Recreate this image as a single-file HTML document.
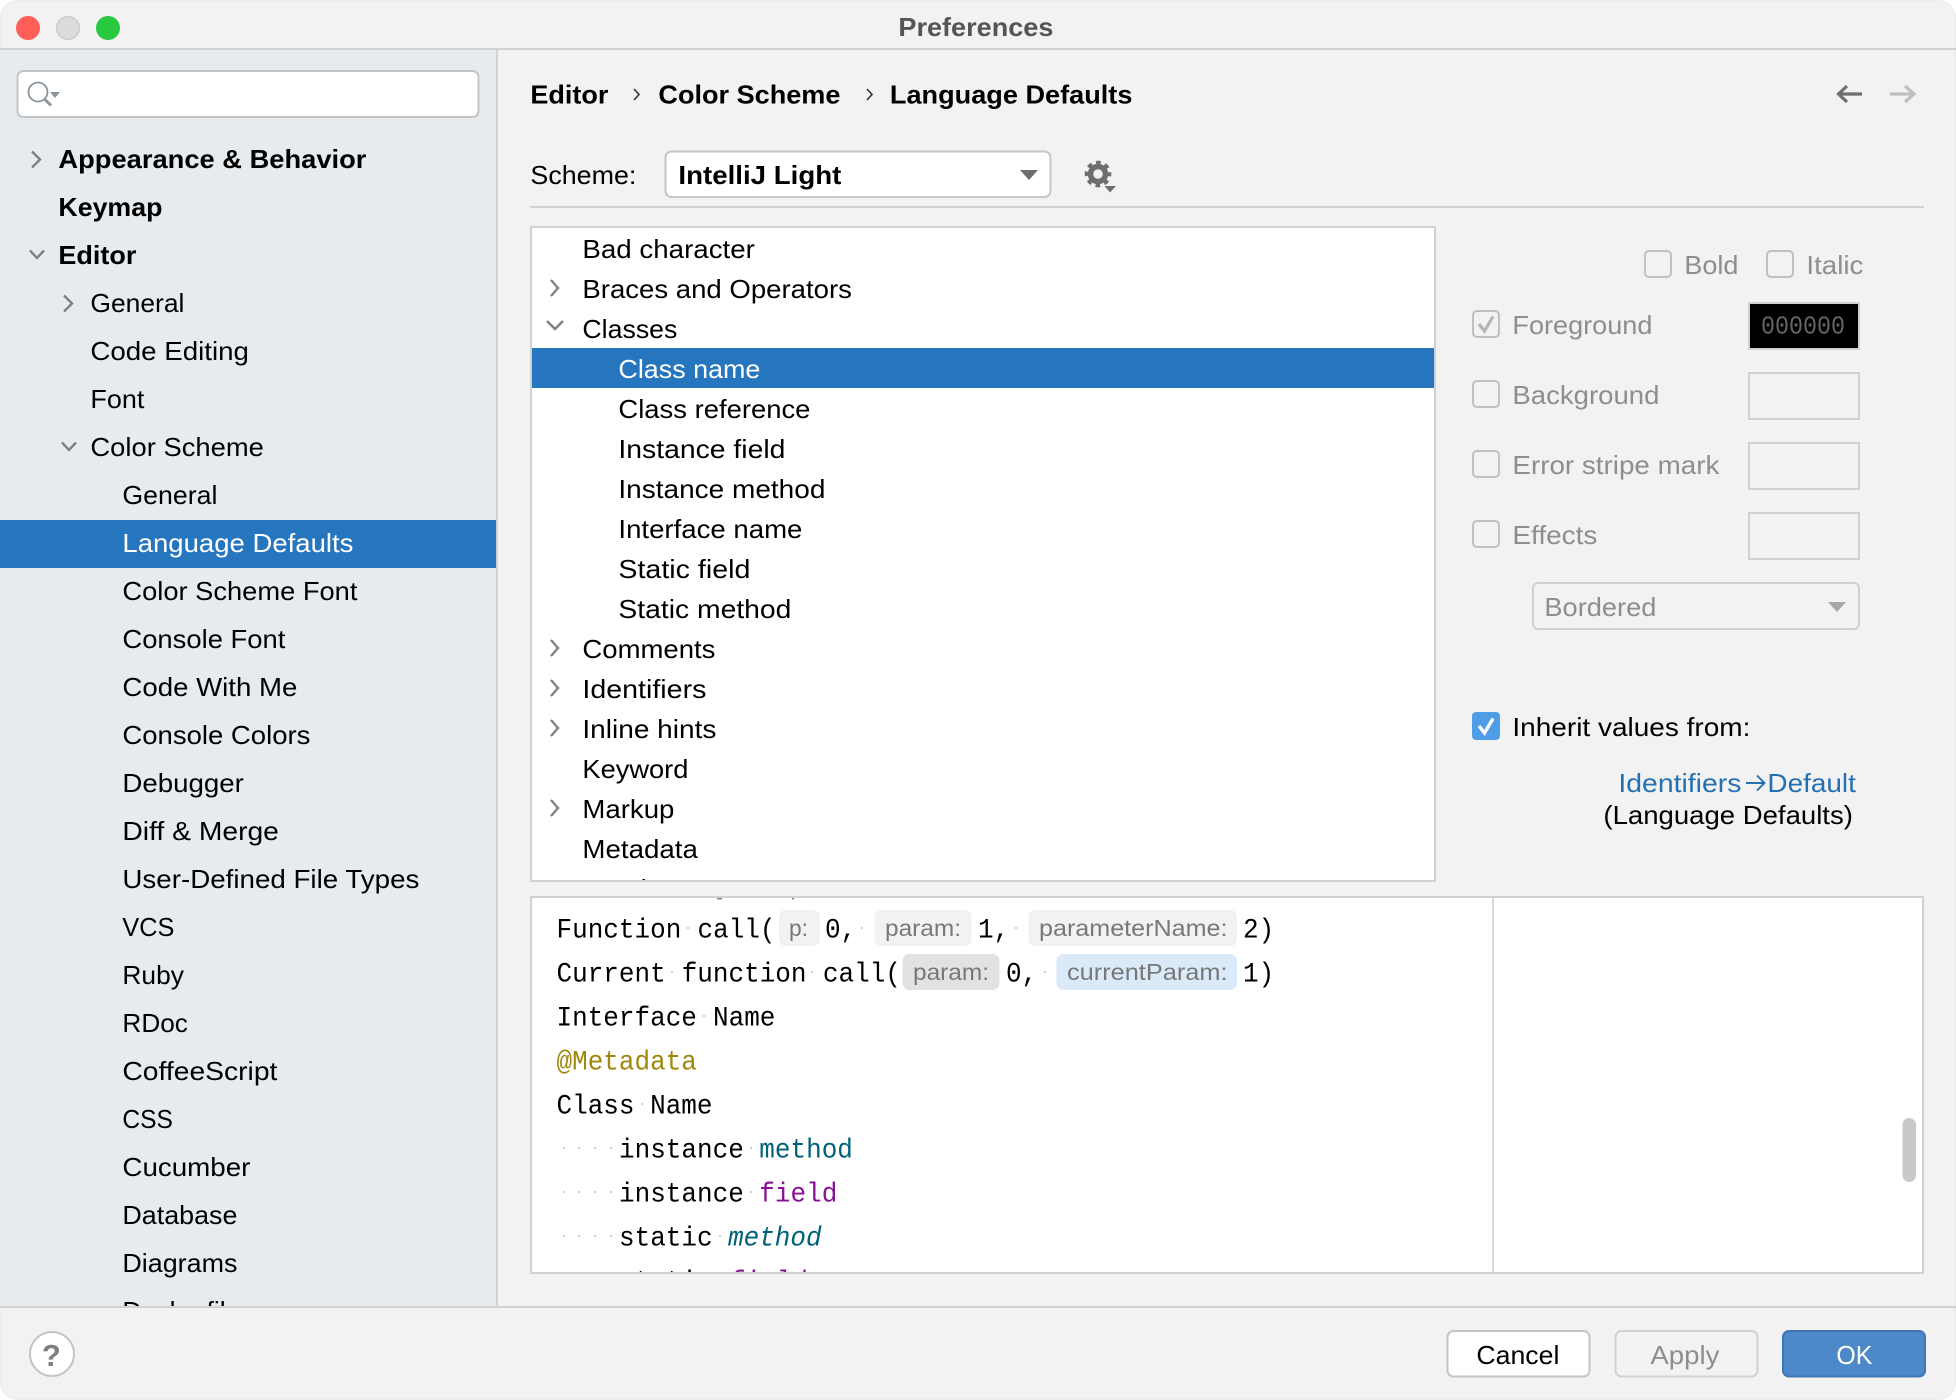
<!DOCTYPE html>
<html><head><meta charset="utf-8"><title>Preferences</title>
<style>
html,body{margin:0;padding:0;background:#fff}
svg{display:block}
text{font-family:"Liberation Sans",sans-serif;font-size:26px;fill:#000;white-space:pre;transform:translateX(-.6px)}
.b{font-weight:bold}
.g{fill:#8e8e8e}
.m{font-family:"Liberation Mono",monospace;font-size:28px;transform:translateY(-.5px)}
.h{font-size:23.5px;fill:#787878;transform:translateY(-.8px)}
.w{fill:#fff}
.c{fill:none;stroke:#808080;stroke-width:2.4}
.d{fill:#cfcfcf}
</style></head>
<body>
<svg width="1956" height="1400" viewBox="0 0 1956 1400" xmlns="http://www.w3.org/2000/svg">
<defs>
<clipPath id="cs"><rect x="0" y="50" width="496" height="1256"/></clipPath>
<clipPath id="cl"><rect x="532" y="229" width="902" height="651"/></clipPath>
<clipPath id="cp"><rect x="532" y="898" width="1390" height="374"/></clipPath>
</defs>
<rect x="0" y="0" width="1956" height="1400" rx="18" fill="#f2f2f2"/>
<rect x="0.5" y="0.5" width="1955" height="1399" rx="18" fill="none" stroke="#ececec"/>

<!-- title bar -->
<rect x="0" y="48" width="1956" height="2" fill="#d1d1d1"/>
<circle cx="28" cy="28" r="12" fill="#ff5f57"/>
<circle cx="68" cy="28" r="11.5" fill="#dcdcdc" stroke="#c6c6c6"/>
<circle cx="108" cy="28" r="12" fill="#28c840"/>
<text class="b" x="899" y="36" textLength="155" lengthAdjust="spacingAndGlyphs" style="fill:#555">Preferences</text>

<!-- sidebar -->
<rect x="0" y="50" width="496" height="1256" fill="#e6ebf0"/>
<rect x="496" y="50" width="2" height="1256" fill="#d1d1d1"/>
<rect x="0" y="520" width="496" height="48" fill="#2675bf"/>
<rect x="17.5" y="71" width="461" height="46" rx="6" fill="#fff" stroke="#c4c4c4" stroke-width="2"/>
<circle cx="38" cy="92" r="9.5" fill="none" stroke="#8a949c" stroke-width="1.8"/>
<path d="M44.5 99 L51 105.5" stroke="#8a949c" stroke-width="2.8" fill="none"/>
<path d="M50 92 H60 L55 98 Z" fill="#8a949c"/>
<g clip-path="url(#cs)">
<text class="b" x="59" y="168" textLength="308" lengthAdjust="spacingAndGlyphs">Appearance &amp; Behavior</text>
<text class="b" x="59" y="216" textLength="104" lengthAdjust="spacingAndGlyphs">Keymap</text>
<text class="b" x="59" y="264" textLength="78" lengthAdjust="spacingAndGlyphs">Editor</text>
<text x="91" y="312" textLength="94" lengthAdjust="spacingAndGlyphs">General</text>
<text x="91" y="360" textLength="158.5" lengthAdjust="spacingAndGlyphs">Code Editing</text>
<text x="91" y="408" textLength="54" lengthAdjust="spacingAndGlyphs">Font</text>
<text x="91" y="456" textLength="173.5" lengthAdjust="spacingAndGlyphs">Color Scheme</text>
<text x="123" y="504" textLength="95" lengthAdjust="spacingAndGlyphs">General</text>
<text class="w" x="123" y="552" textLength="231" lengthAdjust="spacingAndGlyphs">Language Defaults</text>
<text x="123" y="600" textLength="235" lengthAdjust="spacingAndGlyphs">Color Scheme Font</text>
<text x="123" y="648" textLength="163" lengthAdjust="spacingAndGlyphs">Console Font</text>
<text x="123" y="696" textLength="175" lengthAdjust="spacingAndGlyphs">Code With Me</text>
<text x="123" y="744" textLength="188" lengthAdjust="spacingAndGlyphs">Console Colors</text>
<text x="123" y="792" textLength="121.5" lengthAdjust="spacingAndGlyphs">Debugger</text>
<text x="123" y="840" textLength="156.5" lengthAdjust="spacingAndGlyphs">Diff &amp; Merge</text>
<text x="123" y="888" textLength="297" lengthAdjust="spacingAndGlyphs">User-Defined File Types</text>
<text x="123" y="936" textLength="52" lengthAdjust="spacingAndGlyphs">VCS</text>
<text x="123" y="984" textLength="61.5" lengthAdjust="spacingAndGlyphs">Ruby</text>
<text x="123" y="1032" textLength="65.5" lengthAdjust="spacingAndGlyphs">RDoc</text>
<text x="123" y="1080" textLength="155" lengthAdjust="spacingAndGlyphs">CoffeeScript</text>
<text x="123" y="1128" textLength="50.5" lengthAdjust="spacingAndGlyphs">CSS</text>
<text x="123" y="1176" textLength="128" lengthAdjust="spacingAndGlyphs">Cucumber</text>
<text x="123" y="1224" textLength="115" lengthAdjust="spacingAndGlyphs">Database</text>
<text x="123" y="1272" textLength="115" lengthAdjust="spacingAndGlyphs">Diagrams</text>
<text x="123" y="1320" textLength="118" lengthAdjust="spacingAndGlyphs">Dockerfile</text>
</g>
<path class="c" d="M32 151.5 L40 159.5 L32 167.5"/>
<path class="c" d="M30 250.5 L37 258 L44 250.5"/>
<path class="c" d="M64 295.5 L72 303.5 L64 311.5"/>
<path class="c" d="M62 442.5 L69 450 L76 442.5"/>

<!-- breadcrumb -->
<text class="b" x="531" y="103.5" textLength="78" lengthAdjust="spacingAndGlyphs">Editor</text>
<path d="M634 89 L639 94.5 L634 100" fill="none" stroke="#333" stroke-width="1.6"/>
<text class="b" x="659" y="103.5" textLength="182" lengthAdjust="spacingAndGlyphs">Color Scheme</text>
<path d="M867 89 L872 94.5 L867 100" fill="none" stroke="#333" stroke-width="1.6"/>
<text class="b" x="890.5" y="103.5" textLength="242.5" lengthAdjust="spacingAndGlyphs">Language Defaults</text>
<path d="M1862 94 H1840 M1847 86 L1838.5 94 L1847 102" fill="none" stroke="#6e6e6e" stroke-width="3.2"/>
<path d="M1890 94 H1913 M1905 86 L1914 94 L1905 102" fill="none" stroke="#bfbfbf" stroke-width="3.2"/>

<!-- scheme -->
<text x="531" y="184" textLength="106" lengthAdjust="spacingAndGlyphs">Scheme:</text>
<rect x="665.5" y="151.5" width="385" height="45.5" rx="6" fill="#fff" stroke="#c6c6c6" stroke-width="2"/>
<text class="b" x="679" y="184" textLength="163" lengthAdjust="spacingAndGlyphs">IntelliJ Light</text>
<path d="M1020 170 H1038 L1029 180 Z" fill="#6e6e6e"/>
<circle cx="1098" cy="174" r="7.5" fill="none" stroke="#6e6e6e" stroke-width="5.5"/>
<circle cx="1098" cy="174" r="11.3" fill="none" stroke="#6e6e6e" stroke-width="4" stroke-dasharray="4.6 4.28" stroke-dashoffset="2.3"/>
<path d="M1104.5 186 H1116 L1110 192.5 Z" fill="#6e6e6e"/>
<rect x="530" y="206" width="1394" height="2" fill="#d1d1d1"/>

<!-- list -->
<rect x="531" y="227" width="904" height="654" fill="#fff" stroke="#d1d1d1" stroke-width="2"/>
<rect x="532" y="348" width="902" height="40" fill="#2675bf"/>
<g clip-path="url(#cl)">
<text x="583" y="258" textLength="172.5" lengthAdjust="spacingAndGlyphs">Bad character</text>
<text x="583" y="298" textLength="269.5" lengthAdjust="spacingAndGlyphs">Braces and Operators</text>
<text x="583" y="338" textLength="95" lengthAdjust="spacingAndGlyphs">Classes</text>
<text class="w" x="619" y="378" textLength="142" lengthAdjust="spacingAndGlyphs">Class name</text>
<text x="619" y="418" textLength="192" lengthAdjust="spacingAndGlyphs">Class reference</text>
<text x="619" y="458" textLength="167" lengthAdjust="spacingAndGlyphs">Instance field</text>
<text x="619" y="498" textLength="207" lengthAdjust="spacingAndGlyphs">Instance method</text>
<text x="619" y="538" textLength="184" lengthAdjust="spacingAndGlyphs">Interface name</text>
<text x="619" y="578" textLength="132" lengthAdjust="spacingAndGlyphs">Static field</text>
<text x="619" y="618" textLength="173" lengthAdjust="spacingAndGlyphs">Static method</text>
<text x="583" y="658" textLength="133" lengthAdjust="spacingAndGlyphs">Comments</text>
<text x="583" y="698" textLength="124" lengthAdjust="spacingAndGlyphs">Identifiers</text>
<text x="583" y="738" textLength="134" lengthAdjust="spacingAndGlyphs">Inline hints</text>
<text x="583" y="778" textLength="106" lengthAdjust="spacingAndGlyphs">Keyword</text>
<text x="583" y="818" textLength="92" lengthAdjust="spacingAndGlyphs">Markup</text>
<text x="583" y="858" textLength="115.5" lengthAdjust="spacingAndGlyphs">Metadata</text>
<text x="583" y="898" textLength="98" lengthAdjust="spacingAndGlyphs">Number</text>
</g>
<path class="c" d="M551 280 L558 288 L551 296"/>
<path class="c" d="M547 321 L555 329 L563 321"/>
<path class="c" d="M551 640 L558 648 L551 656"/>
<path class="c" d="M551 680 L558 688 L551 696"/>
<path class="c" d="M551 720 L558 728 L551 736"/>
<path class="c" d="M551 800 L558 808 L551 816"/>

<!-- right options -->
<rect x="1645" y="251" width="26" height="26" rx="4" fill="none" stroke="#c0c0c0" stroke-width="2"/>
<text class="g" x="1685" y="274" textLength="54" lengthAdjust="spacingAndGlyphs">Bold</text>
<rect x="1767" y="251" width="26" height="26" rx="4" fill="none" stroke="#c0c0c0" stroke-width="2"/>
<text class="g" x="1807" y="274" textLength="57" lengthAdjust="spacingAndGlyphs">Italic</text>

<rect x="1473" y="311" width="26" height="26" rx="4" fill="none" stroke="#c0c0c0" stroke-width="2"/>
<path d="M1479 324 L1484.5 331 L1493 316.5" fill="none" stroke="#b4b4b4" stroke-width="3.2"/>
<text class="g" x="1513" y="334" textLength="140" lengthAdjust="spacingAndGlyphs">Foreground</text>
<rect x="1749" y="303" width="110" height="46" fill="#000" stroke="#d1d1d1" stroke-width="2"/>
<text class="m" x="1761" y="334" textLength="84" lengthAdjust="spacingAndGlyphs" style="font-size:26px;fill:#666">000000</text>

<rect x="1473" y="381" width="26" height="26" rx="4" fill="none" stroke="#c0c0c0" stroke-width="2"/>
<text class="g" x="1513" y="404" textLength="147" lengthAdjust="spacingAndGlyphs">Background</text>
<rect x="1749" y="373" width="110" height="46" fill="none" stroke="#d1d1d1" stroke-width="2"/>

<rect x="1473" y="451" width="26" height="26" rx="4" fill="none" stroke="#c0c0c0" stroke-width="2"/>
<text class="g" x="1513" y="474" textLength="207" lengthAdjust="spacingAndGlyphs">Error stripe mark</text>
<rect x="1749" y="443" width="110" height="46" fill="none" stroke="#d1d1d1" stroke-width="2"/>

<rect x="1473" y="521" width="26" height="26" rx="4" fill="none" stroke="#c0c0c0" stroke-width="2"/>
<text class="g" x="1513" y="544" textLength="85" lengthAdjust="spacingAndGlyphs">Effects</text>
<rect x="1749" y="513" width="110" height="46" fill="none" stroke="#d1d1d1" stroke-width="2"/>

<rect x="1533" y="583" width="326" height="46" rx="5" fill="none" stroke="#cfcfcf" stroke-width="2"/>
<text class="g" x="1545" y="616" textLength="112" lengthAdjust="spacingAndGlyphs">Bordered</text>
<path d="M1828 602 H1846 L1837 612 Z" fill="#a8a8a8"/>

<rect x="1472" y="712" width="28" height="28" rx="4" fill="#4e9de6"/>
<path d="M1479 726 L1484.5 733 L1493 718.5" fill="none" stroke="#fff" stroke-width="3.4"/>
<text x="1513" y="736" textLength="238" lengthAdjust="spacingAndGlyphs">Inherit values from:</text>
<text x="1619" y="792" textLength="123" lengthAdjust="spacingAndGlyphs" style="fill:#2470b3">Identifiers</text>
<path d="M1746 783 H1764 M1757 775.5 L1764.5 783 L1757 790.5" fill="none" stroke="#2470b3" stroke-width="1.9"/>
<text x="1768" y="792" textLength="88.5" lengthAdjust="spacingAndGlyphs" style="fill:#2470b3">Default</text>
<text x="1604" y="824" textLength="249.5" lengthAdjust="spacingAndGlyphs">(Language Defaults)</text>

<!-- preview -->
<rect x="531" y="897" width="1392" height="376" fill="#fff" stroke="#d1d1d1" stroke-width="2"/>
<rect x="1492" y="898" width="2" height="374" fill="#d9d9d9"/>
<rect x="717" y="898" width="5" height="1.5" fill="#888"/>
<rect x="792" y="898" width="2" height="1.5" fill="#888"/>
<rect x="1902.5" y="1118" width="13.5" height="64" rx="6.7" fill="#c9c9c9"/>

<rect x="779" y="910" width="41" height="36" rx="7" fill="#f2f2f2"/>
<rect x="874.5" y="910" width="97" height="36" rx="7" fill="#f2f2f2"/>
<rect x="1028.5" y="910" width="208.5" height="36" rx="7" fill="#f2f2f2"/>
<rect x="902.5" y="954" width="97" height="36" rx="7" fill="#e2e2e2"/>
<rect x="1056.5" y="954" width="180.5" height="36" rx="7" fill="#daeaf9"/>

<g clip-path="url(#cp)">
<text class="m" x="556.5" y="938" textLength="124.8" lengthAdjust="spacingAndGlyphs">Function</text><rect class="d" x="687" y="927" width="2" height="2"/>
<text class="m" x="697.5" y="938" textLength="78" lengthAdjust="spacingAndGlyphs">call(</text>
<text class="h" x="789" y="937" textLength="19" lengthAdjust="spacingAndGlyphs">p:</text>
<text class="m" x="825" y="938" textLength="31.2" lengthAdjust="spacingAndGlyphs">0,</text><rect class="d" x="861" y="927" width="2" height="2"/>
<text class="h" x="885" y="937" textLength="76" lengthAdjust="spacingAndGlyphs">param:</text>
<text class="m" x="978" y="938" textLength="31.2" lengthAdjust="spacingAndGlyphs">1,</text><rect class="d" x="1015" y="927" width="2" height="2"/>
<text class="h" x="1039" y="937" textLength="188.5" lengthAdjust="spacingAndGlyphs">parameterName:</text>
<text class="m" x="1243" y="938" textLength="31.2" lengthAdjust="spacingAndGlyphs">2)</text>

<text class="m" x="556.5" y="982" textLength="109.2" lengthAdjust="spacingAndGlyphs">Current</text><rect class="d" x="671" y="971" width="2" height="2"/>
<text class="m" x="681.7" y="982" textLength="124.8" lengthAdjust="spacingAndGlyphs">function</text><rect class="d" x="811" y="971" width="2" height="2"/>
<text class="m" x="822.9" y="982" textLength="78" lengthAdjust="spacingAndGlyphs">call(</text>
<text class="h" x="913" y="981" textLength="76" lengthAdjust="spacingAndGlyphs">param:</text>
<text class="m" x="1006" y="982" textLength="31.2" lengthAdjust="spacingAndGlyphs">0,</text><rect class="d" x="1044" y="971" width="2" height="2"/>
<text class="h" x="1067" y="981" textLength="160.5" lengthAdjust="spacingAndGlyphs">currentParam:</text>
<text class="m" x="1243" y="982" textLength="31.2" lengthAdjust="spacingAndGlyphs">1)</text>

<text class="m" x="556.5" y="1026" textLength="140.4" lengthAdjust="spacingAndGlyphs">Interface</text><rect class="d" x="703" y="1015" width="2" height="2"/>
<text class="m" x="713" y="1026" textLength="62.4" lengthAdjust="spacingAndGlyphs">Name</text>
<text class="m" x="556.5" y="1070" textLength="140.4" lengthAdjust="spacingAndGlyphs" style="fill:#9e880d">@Metadata</text>
<text class="m" x="556.5" y="1114" textLength="78" lengthAdjust="spacingAndGlyphs">Class</text><rect class="d" x="641" y="1103" width="2" height="2"/>
<text class="m" x="650.1" y="1114" textLength="62.4" lengthAdjust="spacingAndGlyphs">Name</text>

<rect class="d" x="563" y="1147" width="2" height="2"/><rect class="d" x="578" y="1147" width="2" height="2"/><rect class="d" x="594" y="1147" width="2" height="2"/><rect class="d" x="610" y="1147" width="2" height="2"/>
<text class="m" x="619" y="1158" textLength="124.8" lengthAdjust="spacingAndGlyphs">instance</text><rect class="d" x="750" y="1147" width="2" height="2"/>
<text class="m" x="759.3" y="1158" textLength="93.6" lengthAdjust="spacingAndGlyphs" style="fill:#00627a">method</text>

<rect class="d" x="563" y="1191" width="2" height="2"/><rect class="d" x="578" y="1191" width="2" height="2"/><rect class="d" x="594" y="1191" width="2" height="2"/><rect class="d" x="610" y="1191" width="2" height="2"/>
<text class="m" x="619" y="1202" textLength="124.8" lengthAdjust="spacingAndGlyphs">instance</text><rect class="d" x="750" y="1191" width="2" height="2"/>
<text class="m" x="759.3" y="1202" textLength="78" lengthAdjust="spacingAndGlyphs" style="fill:#871094">field</text>

<rect class="d" x="563" y="1235" width="2" height="2"/><rect class="d" x="578" y="1235" width="2" height="2"/><rect class="d" x="594" y="1235" width="2" height="2"/><rect class="d" x="610" y="1235" width="2" height="2"/>
<text class="m" x="619" y="1246" textLength="93.6" lengthAdjust="spacingAndGlyphs">static</text><rect class="d" x="719" y="1235" width="2" height="2"/>
<text class="m" x="728" y="1246" textLength="93.6" lengthAdjust="spacingAndGlyphs" style="fill:#00627a;font-style:italic">method</text>

<text class="m" x="619" y="1290" textLength="93.6" lengthAdjust="spacingAndGlyphs">static</text>
<text class="m" x="728" y="1290" textLength="78" lengthAdjust="spacingAndGlyphs" style="fill:#871094;font-style:italic">field</text>
</g>

<!-- footer -->
<rect x="0" y="1306" width="1956" height="2" fill="#d1d1d1"/>
<circle cx="52" cy="1354" r="22" fill="#fff" stroke="#c4c4c4" stroke-width="2"/>
<text class="b" x="52" y="1366" text-anchor="middle" style="font-size:31px;fill:#7f7f7f">?</text>

<rect x="1447.5" y="1331" width="142" height="45.5" rx="6" fill="#fff" stroke="#c4c4c4" stroke-width="2"/>
<text x="1477" y="1364" textLength="83" lengthAdjust="spacingAndGlyphs">Cancel</text>
<rect x="1615.5" y="1331" width="142" height="45.5" rx="6" fill="#f2f2f2" stroke="#d1d1d1" stroke-width="2"/>
<text class="g" x="1651" y="1364" textLength="69" lengthAdjust="spacingAndGlyphs">Apply</text>
<rect x="1783" y="1331" width="142" height="45.5" rx="6" fill="#4d89c9" stroke="#3f75b5" stroke-width="2"/>
<text class="w" x="1837" y="1364" textLength="36" lengthAdjust="spacingAndGlyphs">OK</text>
</svg>
</body></html>
